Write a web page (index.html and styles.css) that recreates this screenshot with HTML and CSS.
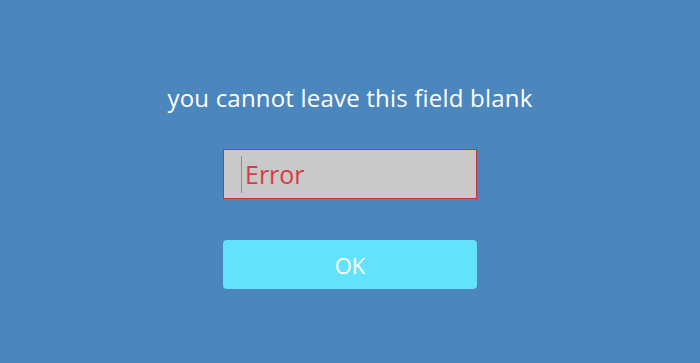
FILE: index.html
```html
<!DOCTYPE html>
<html>
<head>
<meta charset="utf-8">
<link rel="stylesheet" href="styles.css">
</head>
<body>
<div class="dialog">
  <div class="message">you cannot leave this field blank</div>
  <div class="field"><span class="caret"></span><span class="error">Error</span></div>
  <div class="ok">OK</div>
</div>
</body>
</html>
```
FILE: styles.css
```css
html, body {
  margin: 0;
  padding: 0;
  width: 700px;
  height: 363px;
  background: #4b86bc;
  font-family: "Open Sans", "DejaVu Sans", sans-serif;
  overflow: hidden;
}
.dialog {
  display: flex;
  flex-direction: column;
  align-items: center;
  padding-top: 83px;
}
.message {
  color: #ffffff;
  font-size: 24px;
  line-height: 30px;
  height: 30px;
  letter-spacing: 0.2px;
}
.field {
  margin-top: 36px;
  width: 254px;
  height: 50px;
  box-sizing: border-box;
  border: 1px solid #c8303c;
  background: #c9c9c9;
  display: flex;
  align-items: center;
  padding-left: 17px;
}
.caret {
  width: 1px;
  height: 37px;
  background: #8e8e96;
  margin-right: 3px;
}
.error {
  color: #da3a41;
  font-size: 25px;
  line-height: 30px;
}
.ok {
  margin-top: 41px;
  width: 254px;
  height: 49px;
  border-radius: 4px;
  background: #62e3fb;
  color: #ffffff;
  font-size: 22px;
  display: flex;
  align-items: center;
  justify-content: center;
}
```
